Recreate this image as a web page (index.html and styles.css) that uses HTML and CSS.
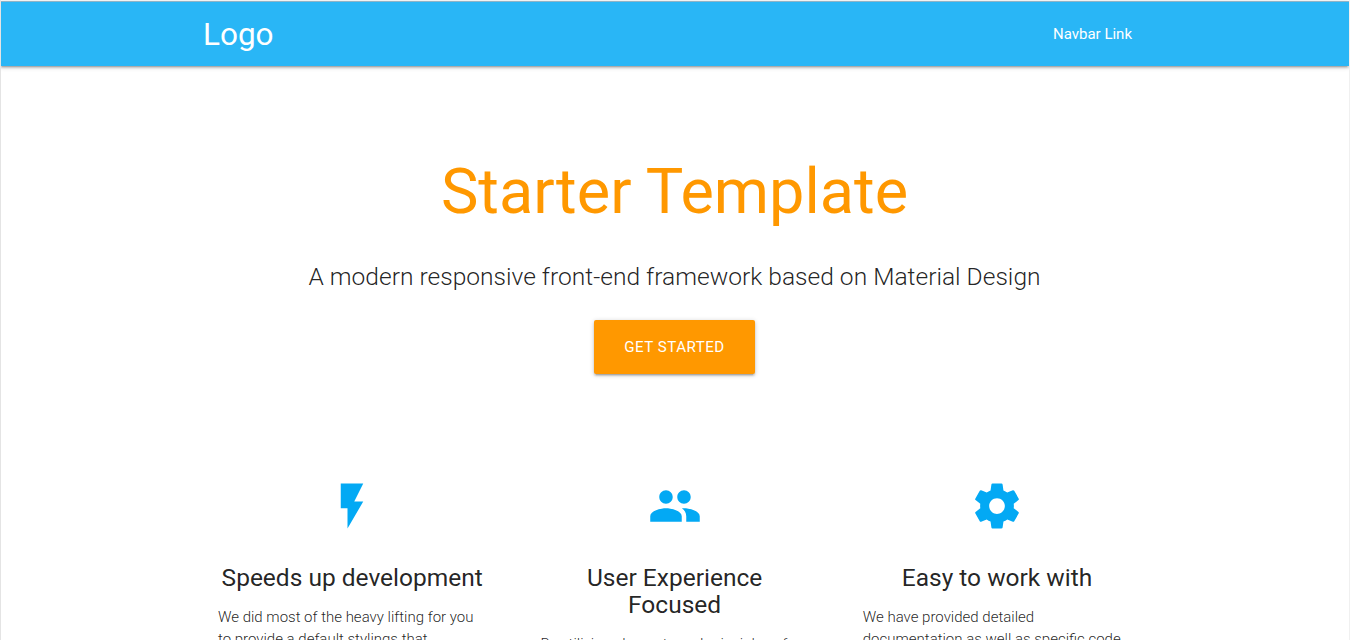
FILE: index.html
```
<!DOCTYPE html>
<html lang="en">
<head>
<meta charset="utf-8">
<title>Starter Template</title>
<link rel="stylesheet" href="styles.css">
</head>
<body>
<nav class="navbar">
  <div class="container navbar-inner">
    <a class="brand">Logo</a>
    <a class="nav-link">Navbar Link</a>
  </div>
</nav>
<main>
  <section class="hero">
    <h1 class="title">Starter Template</h1>
    <p class="tagline">A modern responsive front-end framework based on Material Design</p>
    <a class="button">Get Started</a>
  </section>
  <section class="container features">
    <article class="feature">
      <svg class="icon" viewBox="0 0 24 24"><path d="M7 2v11h3v9l7-12h-4l4-8z"/></svg>
      <h5 class="feature-title">Speeds up development</h5>
      <p class="feature-text">We did most of the heavy lifting for you to provide a default stylings that</p>
    </article>
    <article class="feature">
      <svg class="icon" viewBox="0 0 24 24"><path d="M16 11c1.66 0 2.99-1.34 2.99-3S17.66 5 16 5c-1.66 0-3 1.34-3 3s1.34 3 3 3zm-8 0c1.66 0 2.99-1.34 2.99-3S9.66 5 8 5C6.34 5 5 6.34 5 8s1.34 3 3 3zm0 2c-2.33 0-7 1.17-7 3.500V19h14v-2.500c0-2.330-4.670-3.500-7-3.500zm8 0c-.29 0-.62.02-.97.05 1.160.84 1.970 1.970 1.970 3.450V19h6v-2.500c0-2.330-4.670-3.500-7-3.500z"/></svg>
      <h5 class="feature-title">User Experience Focused</h5>
      <p class="feature-text">By utilizing elements and principles of</p>
    </article>
    <article class="feature">
      <svg class="icon" viewBox="0 0 24 24"><path d="M19.430 12.980c.04-.32.07-.64.07-.98s-.03-.66-.07-.98l2.110-1.650c.19-.15.24-.42.12-.64l-2-3.460c-.12-.22-.39-.3-.61-.22l-2.490 1c-.52-.4-1.080-.73-1.690-.98l-.38-2.650C14.460 2.180 14.250 2 14 2h-4c-.25 0-.46.18-.49.42l-.38 2.650c-.61.25-1.170.59-1.690.98l-2.490-1c-.23-.09-.49 0-.61.22l-2 3.460c-.13.22-.07.49.12.64l2.110 1.650c-.04.32-.07.65-.07.98s.03.66.07.98l-2.110 1.650c-.19.15-.24.42-.12.64l2 3.460c.12.22.39.3.61.22l2.490-1c.52.4 1.080.73 1.690.98l.38 2.650c.03.24.24.42.49.42h4c.25 0 .46-.18.49-.42l.38-2.650c.61-.25 1.170-.59 1.690-.98l2.490 1c.23.09.49 0 .61-.22l2-3.460c.12-.22.07-.49-.12-.64l-2.110-1.650zM12 15.500c-1.930 0-3.500-1.570-3.500-3.500s1.570-3.500 3.500-3.500 3.500 1.570 3.500 3.500-1.570 3.500-3.500 3.500z"/></svg>
      <h5 class="feature-title">Easy to work with</h5>
      <p class="feature-text">We have provided detailed documentation as well as specific code</p>
    </article>
  </section>
</main>
</body>
</html>
```
FILE: styles.css
```
* { box-sizing: border-box; }
html { height: 100%; overflow: hidden; background: #fff; }
body {
  height: 640px;
  margin: 0;
  padding-top: 1px;
  border-left: 1px solid #e4e4e4;
  border-right: 1px solid #f0f0f0;
  font-family: Roboto, sans-serif;
  font-size: 15px;
  line-height: 1.5;
  color: rgba(0, 0, 0, .87);
}
.container { width: 944px; margin: 0 auto; }
.navbar {
  height: 65px;
  margin-left: -1px;
  padding-left: 1px;
  border-top: 1px solid #8fb3c6;
  background: #29b6f6;
  color: #fff;
  box-shadow: 0 2px 2px 0 rgba(0,0,0,.14), 0 3px 1px -2px rgba(0,0,0,.12), 0 1px 5px 0 rgba(0,0,0,.2);
}
.navbar-inner { display: flex; justify-content: space-between; line-height: 65px; }
.brand { font-size: 31.5px; }
.nav-link { padding: 0 15px; }
.hero { display: flex; flex-direction: column; align-items: center; padding: 91px 1px 0 0; }
.title { margin: 0; font-size: 63px; font-weight: 400; line-height: 70px; color: #ff9800; }
.tagline { margin: 31px 0 0; font-size: 24.570px; font-weight: 300; line-height: 37px; }
.button {
  height: 54px;
  margin-top: 25px;
  padding: 0 30px;
  border-radius: 2px;
  background: #ff9800;
  color: #fff;
  font-size: 15.1px;
  line-height: 54px;
  letter-spacing: .5px;
  text-transform: uppercase;
  box-shadow: 0 2px 2px 0 rgba(0,0,0,.14), 0 3px 1px -2px rgba(0,0,0,.12), 0 1px 5px 0 rgba(0,0,0,.2);
}
.features { display: grid; grid-template-columns: repeat(3, 322.4px); width: 968px; padding-top: 105px; }
.feature { padding: 0 27px; }
.icon { display: block; width: 54px; height: 54px; margin: 0 auto; fill: #03a9f4; }
.feature-title { margin: 31px 0 0; font-size: 24.500px; font-weight: 400; line-height: 27px; text-align: center; }
.feature-text { margin: 15px 0 0; font-weight: 300; line-height: 22px; }
```
